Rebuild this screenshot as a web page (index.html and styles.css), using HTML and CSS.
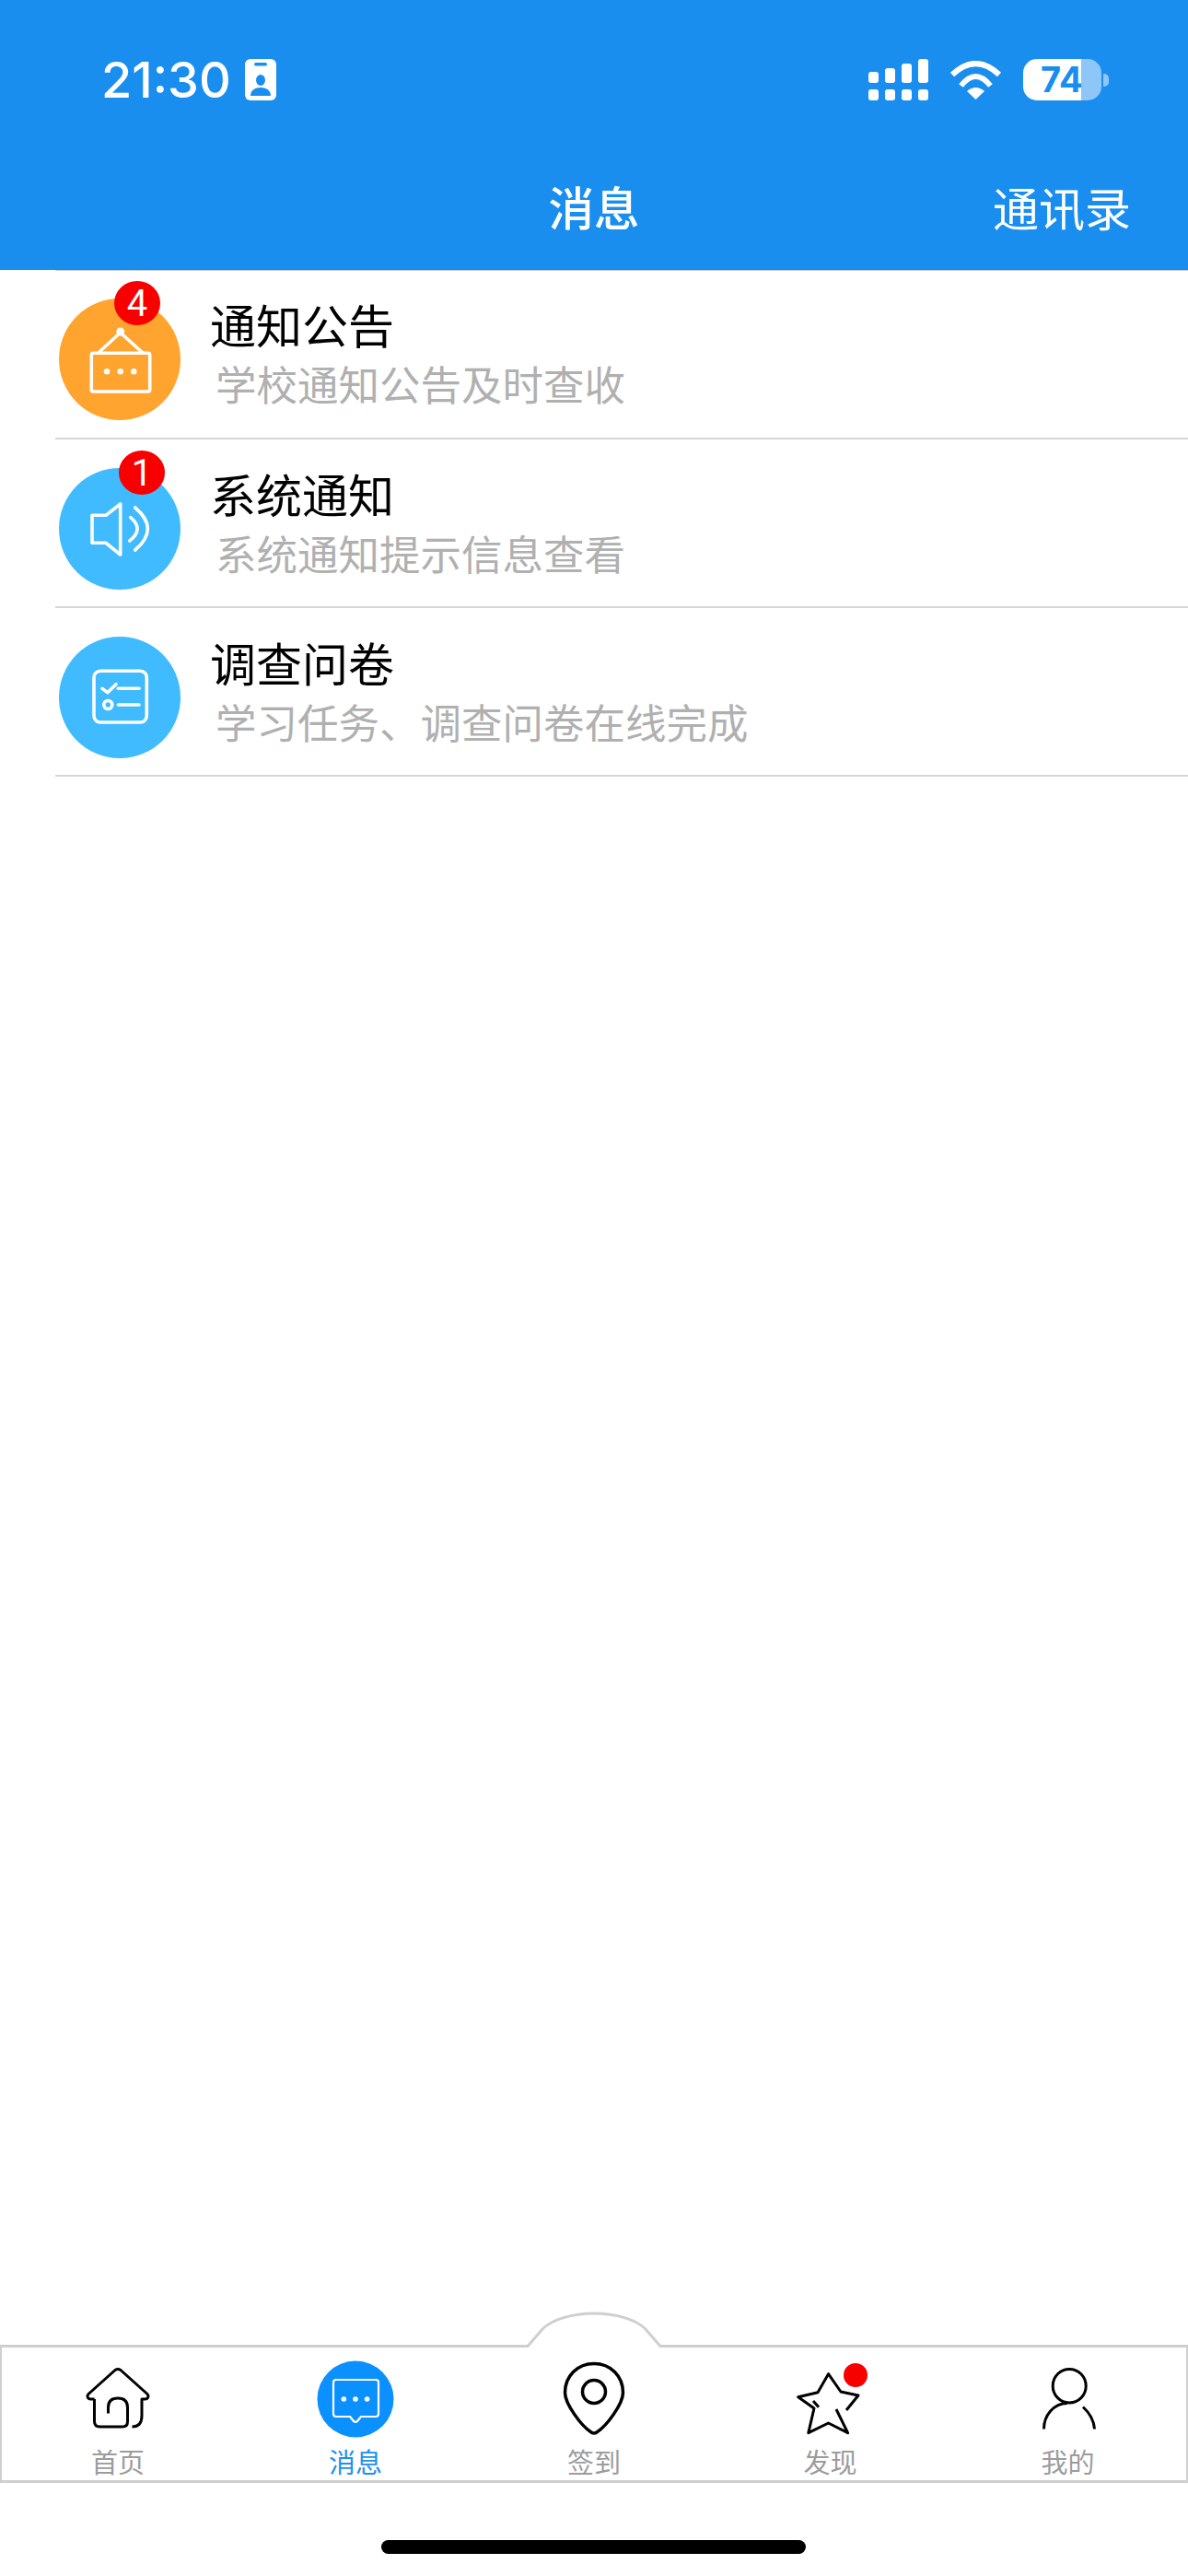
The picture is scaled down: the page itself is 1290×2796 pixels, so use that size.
FILE: index.html
```html
<!DOCTYPE html>
<html lang="zh">
<head>
  <meta charset="UTF-8">
  <title>消息</title>
  <link rel="stylesheet" href="styles.css">
</head>
<body>
  <header class="header">
    <div class="status">
      <div class="status-left">
        <span class="time">21:30</span>
        <svg class="id-icon" viewBox="0 0 34 45">
          <rect class="fill-white" width="34" height="45" rx="6"/>
          <rect class="fill-blue" x="10" y="4" width="14" height="3.5" rx="1.7"/>
          <ellipse class="fill-blue" cx="17" cy="23" rx="5" ry="6"/>
          <path class="fill-blue" d="M6 40 C6 34 11 31 17 31 C23 31 28 34 28 40 Z"/>
        </svg>
      </div>
      <div class="status-right">
        <svg class="signal" viewBox="0 0 65 45">
          <rect class="fill-white" x="0" y="14" width="11" height="12" rx="3"/>
          <rect class="fill-white" x="18" y="10" width="11" height="16" rx="3"/>
          <rect class="fill-white" x="36" y="5" width="11" height="21" rx="3"/>
          <rect class="fill-white" x="54" y="0" width="11" height="26" rx="3"/>
          <rect class="fill-white" x="0" y="33" width="11" height="12" rx="3"/>
          <rect class="fill-white" x="18" y="33" width="11" height="12" rx="3"/>
          <rect class="fill-white" x="36" y="33" width="11" height="12" rx="3"/>
          <rect class="fill-white" x="54" y="33" width="11" height="12" rx="3"/>
        </svg>
        <svg class="wifi" viewBox="0 0 57 42">
          <path class="wifi-arc" d="M3 15 Q28.5 -9 54 15"/>
          <path class="wifi-arc" d="M12.5 27 Q28.5 7 44.5 27"/>
          <path class="fill-white" d="M19 33 Q28.5 25 38 33 L28.5 42 Z"/>
        </svg>
        <div class="battery">
          <span class="battery-body">74</span>
          <span class="battery-nub"></span>
        </div>
      </div>
    </div>
    <nav class="nav">
      <span></span>
      <span class="nav-title">消息</span>
      <span class="nav-link">通讯录</span>
    </nav>
  </header>

  <main class="list">
    <div class="row row-first">
      <div class="avatar orange">
        <svg viewBox="0 0 132 132">
          <path class="line-white" d="M42.7 59 L66.7 37 L91 59"/>
          <rect class="line-white" x="35.3" y="59.3" width="63.4" height="41.7" rx="2"/>
          <circle class="fill-white" cx="66.7" cy="36" r="4.5"/>
          <circle class="fill-white" cx="52" cy="79.3" r="3.3"/>
          <circle class="fill-white" cx="66.7" cy="79.3" r="3.3"/>
          <circle class="fill-white" cx="81.3" cy="79.3" r="3.3"/>
        </svg>
        <span class="badge badge-four">4</span>
      </div>
      <div class="row-text">
        <div class="row-title">通知公告</div>
        <div class="row-sub">学校通知公告及时查收</div>
      </div>
    </div>

    <div class="row">
      <div class="avatar blue">
        <svg viewBox="0 0 132 132">
          <path class="line-white" d="M36 51.3 H51 L66.7 39 V94 L51 81.3 H36 Z"/>
          <path class="line-white" d="M77.7 53.7 Q93 66.3 76.7 79"/>
          <path class="line-white" d="M82.7 43 Q110 66 82.7 89"/>
        </svg>
        <span class="badge badge-one">1</span>
      </div>
      <div class="row-text">
        <div class="row-title">系统通知</div>
        <div class="row-sub">系统通知提示信息查看</div>
      </div>
    </div>

    <div class="row">
      <div class="avatar blue">
        <svg viewBox="0 0 132 132">
          <rect class="line-white" x="38" y="37.3" width="57.3" height="55.7" rx="7"/>
          <path class="line-white" d="M47 56.3 L52.7 60.7 L62 51.7"/>
          <path class="line-white" d="M64.3 56.3 H87"/>
          <circle class="line-white" cx="53.3" cy="74" r="4.5"/>
          <path class="line-white" d="M64.3 74 H87"/>
        </svg>
      </div>
      <div class="row-text">
        <div class="row-title">调查问卷</div>
        <div class="row-sub">学习任务、调查问卷在线完成</div>
      </div>
    </div>
  </main>

  <footer class="tabbar">
    <svg class="bump" viewBox="0 0 150 43">
      <path class="bump-fill" d="M3 43 V40.5 L20 21 C30 12 50 5 75 5 C100 5 120 12 130 21 L147 40.5 V43 Z"/>
      <path class="bump-line" d="M0 40.5 H3 L20 21 C30 12 50 5 75 5 C100 5 120 12 130 21 L147 40.5 H150"/>
    </svg>

    <div class="tab">
      <svg class="tab-icon" viewBox="0 0 84 84">
        <path class="line-black" d="M16.5 42 H12.5 C9 42 8 38.5 10 36.5 L39 10.5 Q42 8.5 45 10.5 L74 36.5 C76 38.5 75 42 71.5 42 H68 V60 Q68 72 57.5 72"/>
        <path class="line-black" d="M16.5 42 V66 Q16.5 72 22.5 72 H47 Q52.5 72 52.5 66.5 V51 Q52.5 41 42 41 Q31.5 41 31.5 51 V57.5"/>
      </svg>
      <span class="tab-label">首页</span>
    </div>

    <div class="tab tab-active">
      <svg class="tab-icon" viewBox="0 0 84 84">
        <circle class="fill-msg" cx="42" cy="42" r="41.5"/>
        <path class="line-thin" d="M21 21 H64 Q67 21 67 24 V58 Q67 61 64 61 H48 L44 66 Q42 67.5 40 66 L36 61 H21 Q18 61 18 58 V24 Q18 21 21 21 Z"/>
        <circle class="fill-white" cx="29.3" cy="42" r="2.8"/>
        <circle class="fill-white" cx="42" cy="42" r="2.8"/>
        <circle class="fill-white" cx="54.6" cy="42" r="2.8"/>
      </svg>
      <span class="tab-label">消息</span>
    </div>

    <div class="tab">
      <svg class="tab-icon" viewBox="0 0 84 84">
        <path class="line-pin" d="M42 3.5 C24 3.5 10.5 17 10.5 35 C10.5 47 28 71 39 78 Q42 80 45 78 C56 71 73.5 47 73.5 35 C73.5 17 60 3.5 42 3.5 Z"/>
        <ellipse class="line-pin" cx="42" cy="34" rx="12.5" ry="12.5"/>
      </svg>
      <span class="tab-label">签到</span>
    </div>

    <div class="tab">
      <svg class="tab-icon" viewBox="0 0 84 84">
        <path class="line-black" d="M59 54 L72 38 L53 34 L39.5 14.7 L28 34.7 L6.7 39.7 L24 52 L17.8 78.7 L39.5 68 L60.6 78.7 L48 53"/>
        <path class="line-black" d="M23 44 L29 50.7"/>
        <ellipse class="fill-red" cx="69" cy="16" rx="13" ry="13"/>
      </svg>
      <span class="tab-label">发现</span>
    </div>

    <div class="tab">
      <svg class="tab-icon" viewBox="0 0 84 84">
        <ellipse class="line-black" cx="43.2" cy="27.7" rx="18" ry="18.3"/>
        <path class="line-black" d="M15.5 74.5 C15.5 60 26 46.5 41 46.5"/>
        <path class="line-black" d="M58 50.5 C65 57 70 66 70.5 74.5"/>
      </svg>
      <span class="tab-label">我的</span>
    </div>
  </footer>

  <div class="home-area">
    <div class="home-bar"></div>
  </div>
</body>
</html>
```

FILE: styles.css
```css
* {
  box-sizing: border-box;
}
html, body {
  margin: 0;
  padding: 0;
}
body {
  width: 1290px;
  height: 2796px;
  display: flex;
  flex-direction: column;
  overflow: hidden;
  background: #fff;
  font-family: "Noto Sans CJK SC", "Noto Sans", sans-serif;
}

/* header */
.header {
  height: 293px;
  padding-top: 64px;
  background: #198eef;
  color: #fff;
  flex: none;
}
.status {
  display: flex;
  justify-content: space-between;
  align-items: center;
  height: 45px;
  padding: 0 86px 0 110px;
}
.status-left, .status-right {
  display: flex;
  align-items: center;
}
.status-left {
  gap: 15px;
}
.status-right {
  gap: 23px;
}
.time {
  font-family: Inter, "Noto Sans", sans-serif;
  font-size: 54px;
  font-weight: 500;
  line-height: 45px;
}
.id-icon {
  width: 34px;
  height: 45px;
}
.signal {
  width: 65px;
  height: 45px;
}
.wifi {
  width: 57px;
  height: 42px;
}
.wifi-arc {
  fill: none;
  stroke: #fff;
  stroke-width: 6;
}
.battery {
  display: flex;
  align-items: center;
  gap: 2px;
}
.battery-body {
  width: 85px;
  height: 45px;
  padding-left: 19px;
  border-radius: 15px;
  background: linear-gradient(to right, #fff 74%, #8dc6f7 74%);
  color: #198eef;
  font-family: Inter, "Noto Sans", sans-serif;
  font-size: 38px;
  font-weight: 700;
  line-height: 45px;
}
.battery-nub {
  width: 6px;
  height: 14px;
  border-radius: 0 5px 5px 0;
  background: #8dc6f7;
}
.nav {
  display: grid;
  grid-template-columns: 1fr auto 1fr;
  align-items: center;
  height: 50px;
  margin-top: 90px;
  padding: 0 62px;
}
.nav-title {
  font-size: 49.5px;
  font-weight: 500;
  line-height: 50px;
}
.nav-link {
  justify-self: end;
  font-size: 50px;
  line-height: 50px;
}

/* message list */
.list {
  flex: 1;
  padding-left: 60px;
}
.row {
  display: flex;
  height: 183px;
  padding: 31px 0 0 4px;
  border-bottom: 2px solid #d6d6d6;
}
.row-first {
  height: 184px;
  border-top: 1px solid #ccc;
  padding-top: 30px;
}
.avatar {
  position: relative;
  width: 132px;
  height: 132px;
  flex: none;
  border-radius: 50%;
}
.avatar svg {
  display: block;
  width: 132px;
  height: 132px;
}
.orange {
  background: #ffa42e;
}
.blue {
  background: #40bbff;
}
.badge {
  position: absolute;
  width: 50px;
  height: 48px;
  border-radius: 50%;
  background: #f80000;
  color: #fff;
  font-family: Roboto, "Noto Sans", sans-serif;
  font-size: 40px;
  line-height: 50px;
  text-align: center;
}
.badge-four {
  left: 60px;
  top: -19px;
}
.badge-one {
  left: 65px;
  top: -19px;
}
.row-text {
  margin-left: 32px;
  padding-top: 2px;
}
.row-title {
  font-size: 50px;
  line-height: 50px;
  color: #000;
}
.row-sub {
  margin: 17px 0 0 6px;
  font-size: 44.5px;
  line-height: 45px;
  color: #b0b0b0;
}

/* tab bar */
.tabbar {
  position: relative;
  display: grid;
  grid-template-columns: 252px 264px 254px 259px 257px;
  flex: none;
  height: 150px;
  border: 3px solid #cfcfcf;
  border-left-width: 2px;
  border-right-width: 2px;
  background: #fff;
}
.bump {
  position: absolute;
  left: 568px;
  top: -42px;
  width: 150px;
  height: 43px;
}
.bump-fill {
  fill: #fff;
}
.bump-line {
  fill: none;
  stroke: #cfcfcf;
  stroke-width: 3;
}
.tab {
  display: flex;
  flex-direction: column;
  align-items: center;
  padding-top: 14px;
}
.tab-icon {
  display: block;
  width: 84px;
  height: 84px;
}
.tab-label {
  margin-top: 11px;
  font-size: 29px;
  line-height: 28px;
  color: #9c9c9c;
}
.tab-active .tab-label {
  color: #1c90ef;
}

/* shared svg paints */
.fill-white {
  fill: #fff;
}
.fill-blue {
  fill: #198eef;
}
.fill-msg {
  fill: #0a90ff;
}
.fill-red {
  fill: #f80000;
}
.line-white {
  fill: none;
  stroke: #fff;
  stroke-width: 3.6;
  stroke-linecap: round;
  stroke-linejoin: round;
}
.line-thin {
  fill: none;
  stroke: #fff;
  stroke-width: 2.2;
  stroke-linejoin: round;
}
.line-black {
  fill: none;
  stroke: #000;
  stroke-width: 3;
  stroke-linejoin: round;
}
.line-pin {
  fill: none;
  stroke: #000;
  stroke-width: 3.5;
}

/* home indicator */
.home-area {
  flex: none;
  height: 101px;
  padding-top: 62px;
}
.home-bar {
  width: 461px;
  height: 15px;
  margin-left: 414px;
  border-radius: 8px;
  background: #000;
}
```
